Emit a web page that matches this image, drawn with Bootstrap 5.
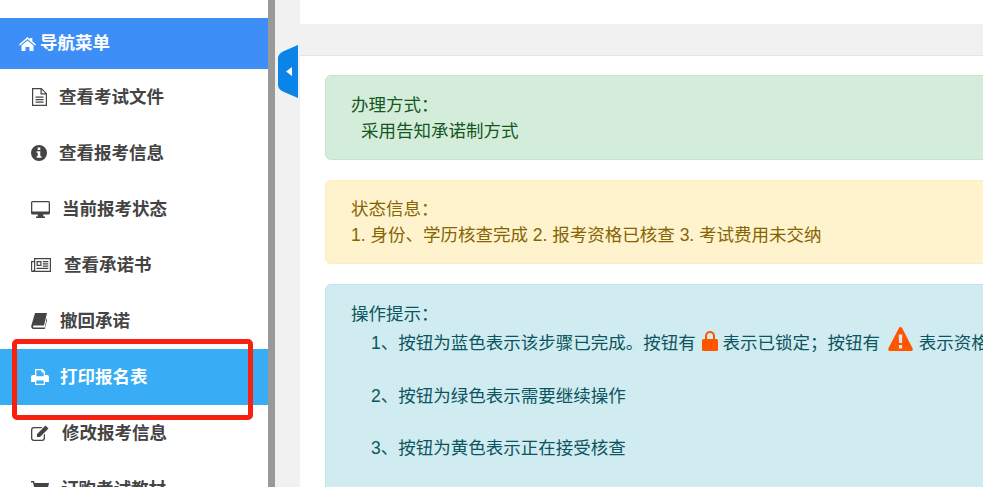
<!DOCTYPE html>
<html lang="zh-CN">
<head>
<meta charset="utf-8">
<title>导航菜单</title>
<link rel="stylesheet" href="https://cdn.jsdelivr.net/npm/bootstrap@5.3.0/dist/css/bootstrap.min.css">
<style>
html,body{height:487px;overflow:hidden;background:#fff}
body{font-family:"Liberation Sans","Noto Sans CJK SC",sans-serif;font-size:17.5px;line-height:1.5;position:relative}
.shell{height:487px;width:1300px}
.side{width:268px;padding-top:18px;background:#fff;flex:none}
.side-head{height:51px;flex:none;background:#3d8ff7;color:#fff;font-weight:700;padding-left:19px;gap:4px}
.side-head svg{fill:#fff}
.side-link{height:56px;padding-left:31px;color:#444;font-weight:700;text-decoration:none;gap:12px;white-space:nowrap;flex:none}
.side-link svg{fill:#444;flex:none}
.side-link.on{background:#38acf4;color:#fff}
.side-link.on svg{fill:#fff}
.gap-wide{gap:13px}
.gap-tight{gap:11px}
.divider{width:7px;background:#999;flex:none}
.gutter{width:25px;background:#f1f1f1;flex:none}
.pane{width:1000px;flex:none}
.pane-top{height:24px;flex:none}
.pane-strip{height:32px;background:#f1f1f1;border-bottom:1px solid #e5e5e5;flex:none}
.pane-body{padding:19px 25px}
.note{border:1px solid;border-radius:6px;padding:16px 25px 14px;margin-bottom:20px;white-space:nowrap}
.note-g{background:#d4edda;border-color:#c3e6cb;color:#155724}
.note-y{background:#fff3cd;border-color:#ffeeba;color:#856404;padding-top:15px;height:84px}
.note-b{background:#d1ecf1;border-color:#bee5eb;color:#0c5460;height:260px}
.ind1{padding-left:10px}
.ind2{padding-left:20px}
.tip-ic{fill:#ff5500;vertical-align:-2px}
.tip-lock{margin-left:1px}
.tip-warn{margin-left:3px;margin-right:1px}
.gap-after{margin-bottom:26.5px}
.collapse-tab{position:absolute;left:278px;top:45px}
.red-frame{position:absolute;left:12px;top:339px;width:241px;height:81px;border:5.5px solid #f8200f;border-radius:5px}
</style>
</head>
<body>
<div class="shell d-flex">
  <nav class="side d-flex flex-column">
    <div class="side-head d-flex align-items-center">
      <svg width="17" height="14" viewBox="0 0 17 14"><path d="M8.500 0 11 2.200V1h2.300v3.300L17 7.500l-1 1.100L8.500 2 1 8.600 0 7.500zM8.500 3.400 14.500 8.600V14h-4V10h-4v4h-4V8.600z"/></svg>
      <span>导航菜单</span>
    </div>
    <a class="side-link d-flex align-items-center" href="#">
      <svg width="16" height="18" viewBox="0 0 16 18"><path fill-rule="evenodd" d="M1 0h9.500L16 5.500V18H1zM2.200 1.200v15.600h12.600V6.500H9.500V1.200zM10.700 1.700v3.600h3.600zM4.500 8.500h8v1.200h-8zM4.500 11h8v1.200h-8zM4.500 13.500h8v1.200h-8z"/></svg>
      <span>查看考试文件</span>
    </a>
    <a class="side-link d-flex align-items-center" href="#">
      <svg width="16" height="16" viewBox="0 0 16 16"><path fill-rule="evenodd" d="M8 0a8 8 0 1 1 0 16A8 8 0 0 1 8 0zM6.700 2.500v2.400h2.600V2.500zM5.600 6.200v1.500h1.100v3.500H5.600v1.600h4.900v-1.600H9.300V6.200z"/></svg>
      <span>查看报考信息</span>
    </a>
    <a class="side-link d-flex align-items-center" href="#">
      <svg width="19" height="17" viewBox="0 0 19 17"><path fill-rule="evenodd" d="M1.500 0h16A1.500 1.500 0 0 1 19 1.500v10.500a1.500 1.500 0 0 1-1.500 1.500H12l.5 2h1.500v1.500H5V15.500h1.500l.5-2H1.500A1.500 1.500 0 0 1 0 12V1.500A1.500 1.500 0 0 1 1.500 0zM1.300 1.300v9.200h16.400V1.300z"/></svg>
      <span>当前报考状态</span>
    </a>
    <a class="side-link gap-wide d-flex align-items-center" href="#">
      <svg width="20" height="14" viewBox="0 0 20 14"><path fill-rule="evenodd" d="M3 0h17v14H1.500A1.500 1.500 0 0 1 0 12.500V3h3zM4.200 1.200v11.600H18.800V1.200zM1.200 4.200v8.300a.3.3 0 0 0 .6 0 .6.6 0 0 1 1.200 0V4.200zM5.500 3h5v5h-5zM6.700 4.200v2.600h2.600V4.200zM11.800 3h5.500v1.200h-5.500zM11.800 5.300h5.500v1.200h-5.500zM11.800 7.500h5.500v1.200h-5.500zM5.500 9.800h11.800v1.200H5.500z"/></svg>
      <span>查看承诺书</span>
    </a>
    <a class="side-link gap-wide d-flex align-items-center" href="#">
      <svg width="16" height="16" viewBox="0 0 16 16"><path fill-rule="evenodd" d="M4 0h12l-3 12.500H3.500c-1 0-1.400.4-1.400 1s.5 1 1.300 1h10.400l1.700-9 .8.600L13.800 16H3C1 16 0 14.600.3 12.800z"/></svg>
      <span>撤回承诺</span>
    </a>
    <a class="side-link on gap-tight d-flex align-items-center" href="#">
      <svg width="18" height="16" viewBox="0 0 18 16"><path fill-rule="evenodd" d="M4 0h7.500L14 2.500V6h2a2 2 0 0 1 2 2v5h-4v3H4v-3H0V8a2 2 0 0 1 2-2h2zM5.300 1.300V7.200h7.400V3.500H10.500V1.300zM5.300 11.500v3.200h7.400v-3.200z"/></svg>
      <span>打印报名表</span>
    </a>
    <a class="side-link gap-wide d-flex align-items-center" href="#">
      <svg width="18" height="16" viewBox="0 0 18 16"><path fill-rule="evenodd" d="M3 2h8.500L10.300 3.300H3A1.700 1.700 0 0 0 1.300 5v8A1.700 1.700 0 0 0 3 14.700h8A1.700 1.700 0 0 0 12.700 13V10L14 8.700V13a3 3 0 0 1-3 3H3a3 3 0 0 1-3-3V5a3 3 0 0 1 3-3zM14.500.5l3 3L9 12H6V9z"/></svg>
      <span>修改报考信息</span>
    </a>
    <a class="side-link d-flex align-items-center" href="#">
      <svg width="18" height="16" viewBox="0 0 18 16"><path d="M0 0h3l.6 2H18l-1.500 7H5.500l.3 1.500H16V12H4.500L2 1.500H0z"/></svg>
      <span>订购考试教材</span>
    </a>
  </nav>
  <div class="divider"></div>
  <div class="gutter"></div>
  <main class="pane d-flex flex-column">
    <div class="pane-top"></div>
    <div class="pane-strip"></div>
    <div class="pane-body">
      <div class="note note-g">
        <div>办理方式：</div>
        <div class="ind1">采用告知承诺制方式</div>
      </div>
      <div class="note note-y">
        <div>状态信息：</div>
        <div>1. 身份、学历核查完成 2. 报考资格已核查 3. 考试费用未交纳</div>
      </div>
      <div class="note note-b">
        <div>操作提示：</div>
        <div class="ind2 gap-after">1、按钮为蓝色表示该步骤已完成。按钮有
          <svg class="tip-ic tip-lock" width="16" height="20" viewBox="0 0 16 20"><path fill-rule="evenodd" d="M3 8V5a5 5 0 0 1 10 0v3h1.500A1.500 1.500 0 0 1 16 9.500v9a1.500 1.500 0 0 1-1.500 1.500h-13A1.500 1.500 0 0 1 0 18.500v-9A1.500 1.500 0 0 1 1.500 8zM5 8h6V5a3 3 0 0 0-6 0z"/></svg>
          表示已锁定；按钮有
          <svg class="tip-ic tip-warn" width="25" height="24" viewBox="0 0 25 24"><path fill-rule="evenodd" d="M12.500 0c.7 0 1.200.4 1.600 1l10.500 20.300c.6 1.200-.2 2.700-1.600 2.700H2C.6 24-.2 22.500.4 21.300L10.900 1c.4-.6.900-1 1.600-1zM10.700 7.500l.3 8.500h3l.3-8.500zM10.900 18v3.500h3.200V18z"/></svg>
          表示资格审查未通过</div>
        <div class="ind2 gap-after">2、按钮为绿色表示需要继续操作</div>
        <div class="ind2">3、按钮为黄色表示正在接受核查</div>
      </div>
    </div>
  </main>
</div>
<svg class="collapse-tab" width="20" height="53" viewBox="0 0 20 53"><path fill="#0a84e6" d="M20 0V53L6 47C2 45 0 43 0 40V13C0 10 2 8 6 6z"/><path fill="#fff" d="M14 22V31L8 26.500z"/></svg>
<div class="red-frame"></div>
<script src="https://cdn.jsdelivr.net/npm/bootstrap@5.3.0/dist/js/bootstrap.bundle.min.js"></script>
</body>
</html>
